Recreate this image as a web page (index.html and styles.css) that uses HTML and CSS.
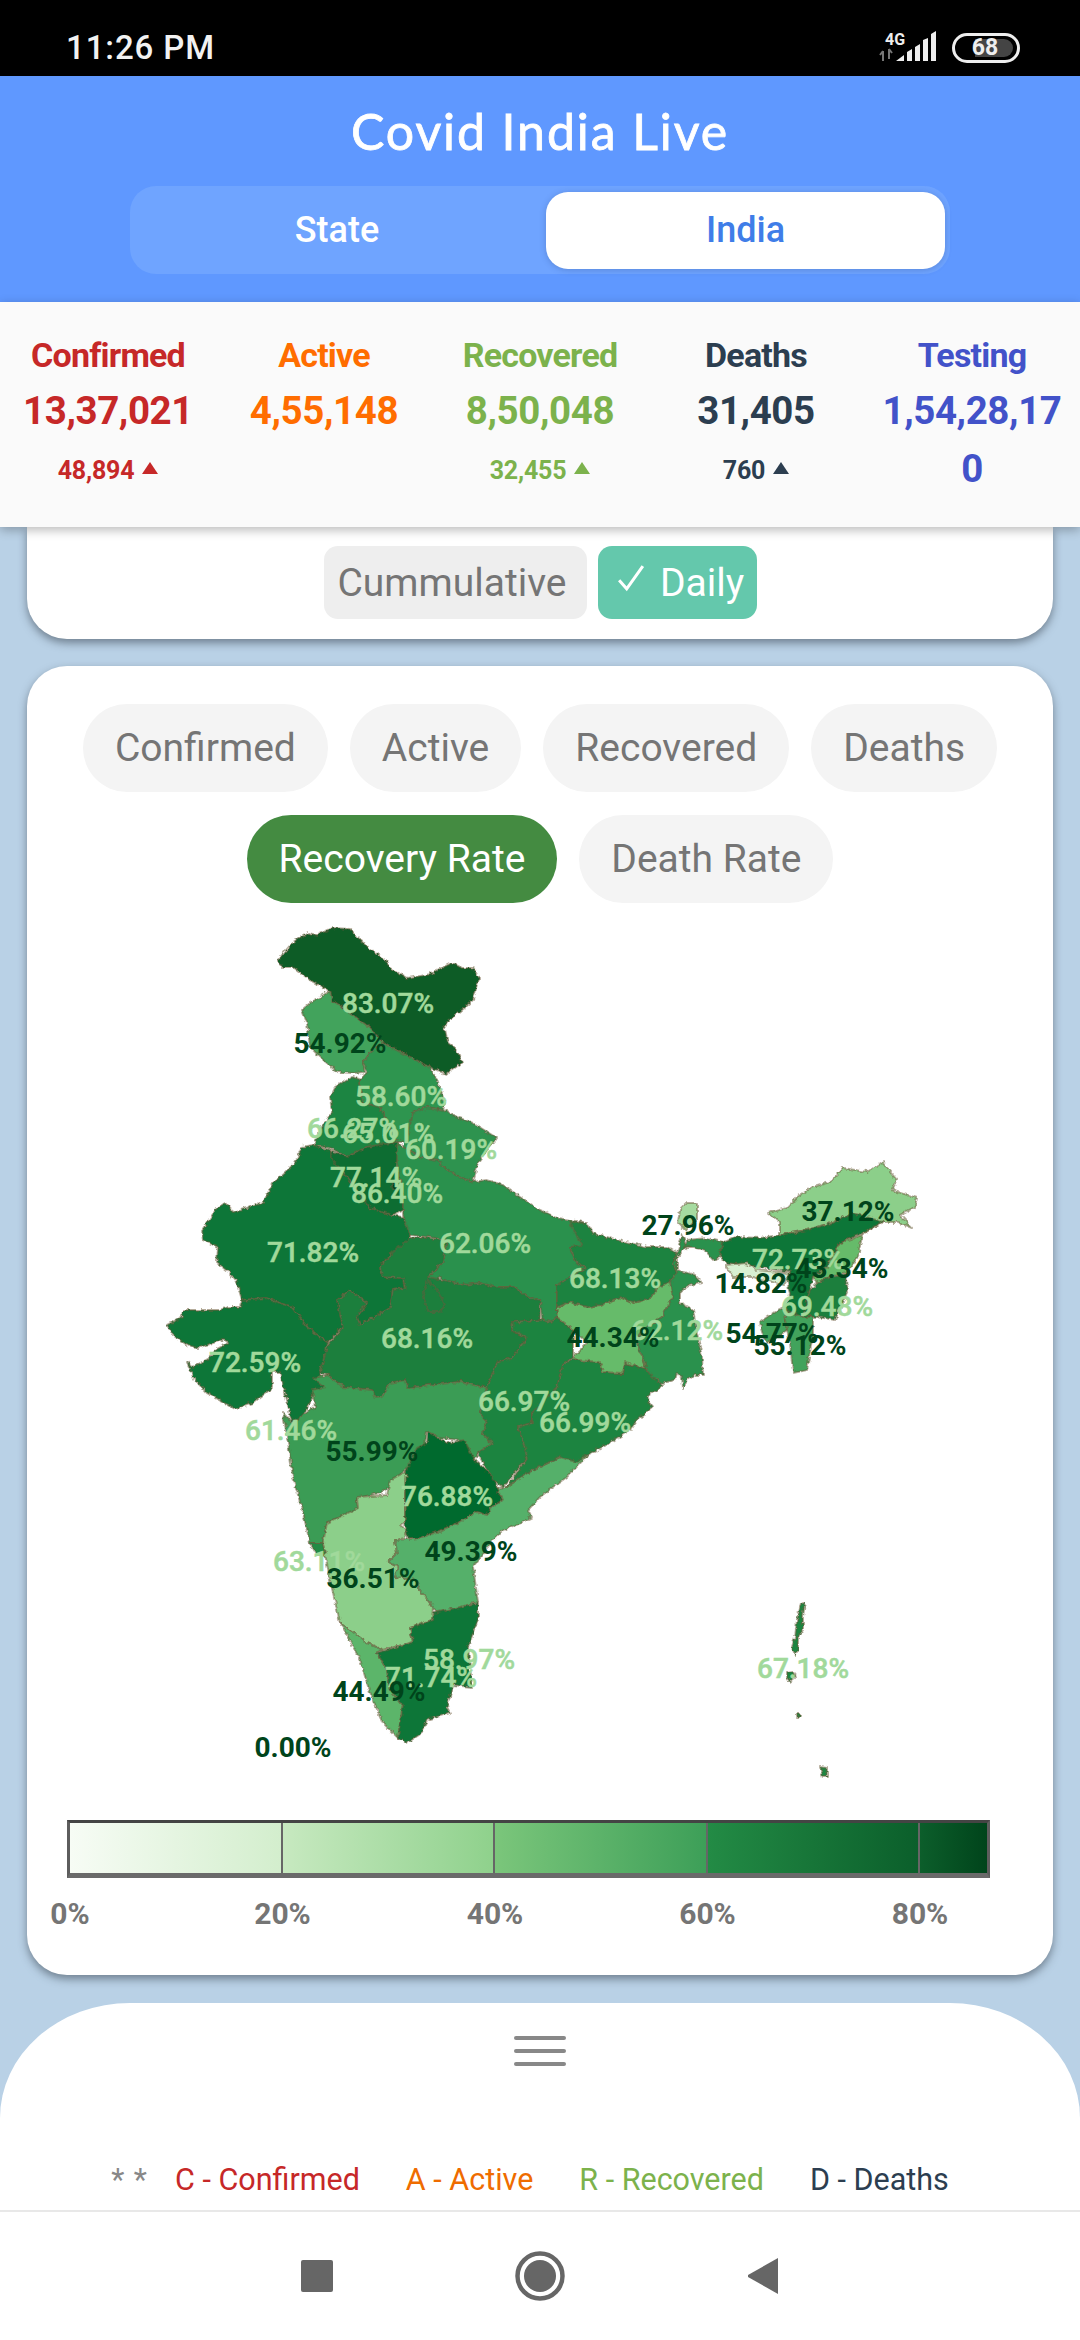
FILE: index.html
```html
<!DOCTYPE html>
<html lang="en">
<head>
<meta charset="utf-8">
<title>Covid India Live</title>
<link rel="stylesheet" href="styles.css">
</head>
<body>
<div class="phone">
  <div class="status">
    <span class="time">11:26 PM</span>
    <div class="status-right">
      <svg class="signal" width="62" height="34" viewBox="0 0 62 34">
        <text class="net" x="6" y="14">4G</text>
        <path class="arrows" d="M4 30V20M1 24l3-4M10 18v10M10 18l3 4" />
        <path class="bars" d="M17 30l8-6v6zM28 21l5-3v12h-5zM36 16l5-3v17h-5zM44 9l5-2v23h-5zM52 3l5-3v30h-5z"/>
      </svg>
      <div class="battery"><span class="battery-fill"></span><span class="battery-num">68</span></div>
    </div>
  </div>

  <header class="head">
    <h1 class="title">Covid India Live</h1>
    <div class="tabs">
      <div class="tab">State</div>
      <div class="tab tab-on">India</div>
    </div>
  </header>

  <section class="stats">
    <div class="stat red"><div class="stat-label">Confirmed</div><div class="stat-value">13,37,021</div><div class="stat-delta">48,894 <svg class="tri" viewBox="0 0 16 12"><path d="M8 0l8 12H0z"/></svg></div></div>
    <div class="stat orange"><div class="stat-label">Active</div><div class="stat-value">4,55,148</div></div>
    <div class="stat green"><div class="stat-label">Recovered</div><div class="stat-value">8,50,048</div><div class="stat-delta">32,455 <svg class="tri" viewBox="0 0 16 12"><path d="M8 0l8 12H0z"/></svg></div></div>
    <div class="stat navy"><div class="stat-label">Deaths</div><div class="stat-value">31,405</div><div class="stat-delta">760 <svg class="tri" viewBox="0 0 16 12"><path d="M8 0l8 12H0z"/></svg></div></div>
    <div class="stat blue"><div class="stat-label">Testing</div><div class="stat-value wrap">1,54,28,170</div></div>
  </section>

  <main class="content">
    <section class="card card-top">
      <div class="toggle">
        <div class="toggle-btn toggle-off">Cummulative</div>
        <div class="toggle-btn toggle-on"><svg class="check" viewBox="0 0 26 26"><path d="M2 15l7 8L24 2"/></svg>Daily</div>
      </div>
    </section>

    <section class="card card-map">
      <div class="chips">
        <div class="chip">Confirmed</div>
        <div class="chip">Active</div>
        <div class="chip">Recovered</div>
        <div class="chip">Deaths</div>
        <div class="chip chip-on">Recovery Rate</div>
        <div class="chip">Death Rate</div>
      </div>

      <svg class="map" width="1026" height="880" viewBox="27 905 1026 880">
        <defs>
          <filter id="rough" filterUnits="userSpaceOnUse" x="27" y="905" width="1026" height="880">
            <feTurbulence type="fractalNoise" baseFrequency="0.22" numOctaves="2" seed="4" result="n"/>
            <feDisplacementMap in="SourceGraphic" in2="n" scale="5" xChannelSelector="R" yChannelSelector="G"/>
          </filter>
        </defs>
        <g class="states" filter="url(#rough)">
          <polygon class="s83" points="278,960 293,942 308,933 317,935 333,928 350,929 367,947 385,960 390,968 407,978 427,975 452,963 462,968 473,968 479,978 473,1000 455,1015 444,1025 448,1043 457,1050 462,1063 446,1074 430,1067 410,1057 383,1043 370,1028 353,1015 332,1000 330,991 310,980 293,967 282,967"/>
          <polygon class="s55" points="330,991 332,1000 353,1015 370,1028 383,1043 370,1053 363,1063 365,1072 353,1073 337,1072 320,1057 310,1047 307,1023 302,1010 310,1003 320,997"/>
          <polygon class="s59" points="370,1053 383,1043 410,1057 430,1067 437,1080 445,1103 443,1110 427,1107 413,1113 410,1133 407,1142 397,1142 383,1113 380,1107 363,1103 360,1090 360,1080 367,1072 363,1063"/>
          <polygon class="s66" points="360,1080 353,1077 335,1087 330,1097 332,1112 322,1127 313,1145 330,1148 348,1157 367,1147 387,1145 397,1142 383,1113 380,1107 363,1103 360,1090"/>
          <polygon class="s60" points="413,1113 427,1107 443,1110 457,1117 473,1123 497,1138 487,1150 478,1163 473,1182 460,1177 443,1167 438,1160 420,1157 403,1147 407,1137"/>
          <polygon class="s72" points="313,1145 302,1147 295,1163 273,1183 263,1203 233,1212 225,1203 217,1208 202,1230 203,1240 218,1247 217,1262 227,1270 237,1283 242,1300 267,1298 293,1308 307,1327 328,1343 337,1333 343,1327 337,1300 350,1290 367,1303 357,1317 360,1325 390,1308 393,1290 405,1288 403,1278 383,1277 380,1267 390,1255 427,1238 410,1238 410,1230 403,1217 392,1215 370,1208 357,1190 340,1168 330,1150"/>
          <polygon class="s77" points="330,1150 348,1157 367,1147 397,1142 400,1147 397,1163 403,1193 403,1210 392,1215 370,1208 363,1200 357,1190 340,1168 333,1162"/>
          <polygon class="s86" points="391,1181 397,1180 399,1188 393,1190"/>
          <polygon class="s62" points="403,1147 420,1157 438,1160 443,1167 460,1177 473,1182 487,1180 503,1185 520,1197 540,1210 557,1218 570,1220 583,1222 590,1237 583,1247 570,1247 577,1263 587,1268 557,1285 557,1307 557,1317 550,1322 542,1320 540,1300 530,1298 513,1287 493,1287 480,1283 467,1285 443,1280 440,1277 437,1290 445,1305 440,1312 428,1312 423,1293 428,1277 442,1263 447,1240 428,1237 410,1235 403,1215 403,1193 397,1163 397,1142"/>
          <polygon class="s68" points="427,1238 410,1238 390,1255 380,1267 383,1277 403,1278 405,1288 393,1290 390,1308 360,1325 357,1317 367,1303 350,1290 337,1300 343,1327 328,1345 325,1353 320,1373 328,1375 343,1387 372,1390 375,1398 382,1397 390,1383 405,1380 408,1388 430,1385 460,1382 487,1388 497,1363 513,1357 527,1338 512,1330 513,1322 540,1320 540,1300 530,1298 513,1287 493,1287 480,1283 467,1285 443,1280 428,1277 442,1263 447,1240"/>
          <polygon class="s68" points="437,1290 445,1305 440,1312 428,1312 423,1293 428,1280"/>
          <polygon class="s72" points="242,1300 267,1298 293,1308 307,1327 328,1343 322,1365 320,1373 325,1390 315,1390 310,1403 302,1417 292,1423 287,1400 283,1385 280,1372 272,1372 272,1388 253,1403 235,1409 220,1400 207,1393 195,1380 187,1362 193,1367 210,1358 218,1348 230,1342 222,1340 198,1348 187,1345 173,1335 167,1325 182,1317 183,1310 220,1310 228,1307 240,1307"/>
          <polygon class="s56" points="313,1378 328,1375 343,1387 372,1390 375,1398 382,1397 390,1383 405,1380 408,1388 430,1385 460,1382 487,1388 480,1413 487,1423 482,1433 493,1443 478,1453 473,1463 468,1450 460,1440 440,1438 427,1432 425,1443 417,1455 410,1467 402,1472 397,1483 380,1493 357,1498 358,1510 327,1523 323,1543 310,1543 303,1513 293,1477 288,1443 283,1413 292,1423 300,1417 315,1407 312,1390 325,1387"/>
          <polygon class="s63" points="310,1543 323,1543 326,1556 317,1555"/>
          <polygon class="s36" points="405,1472 408,1477 405,1493 405,1522 400,1525 407,1530 405,1538 395,1540 397,1553 388,1562 398,1567 395,1577 417,1580 420,1590 433,1607 432,1620 410,1628 413,1642 383,1650 367,1643 340,1622 330,1580 323,1543 327,1523 358,1508 357,1497 387,1495 390,1480"/>
          <polygon class="s76" points="428,1432 447,1443 465,1440 470,1452 477,1462 495,1478 497,1488 503,1500 490,1508 487,1515 477,1512 460,1522 437,1532 420,1538 408,1538 405,1523 405,1477 408,1477 405,1472 417,1448 427,1443"/>
          <polygon class="s49" points="588,1455 567,1477 553,1487 540,1497 528,1510 532,1517 520,1523 503,1530 493,1540 473,1567 478,1602 457,1608 437,1613 433,1607 420,1590 417,1580 395,1577 398,1567 388,1562 397,1553 395,1540 420,1538 437,1532 460,1522 477,1512 487,1515 490,1508 503,1500 497,1488 507,1487 527,1473 560,1457"/>
          <polygon class="s67" points="513,1322 542,1320 550,1322 557,1317 573,1330 573,1357 563,1365 557,1387 540,1407 532,1413 532,1423 518,1427 525,1447 527,1458 513,1475 503,1487 497,1483 485,1467 478,1453 493,1443 482,1433 487,1423 480,1413 487,1388 497,1363 513,1357 527,1338 512,1330"/>
          <polygon class="s67" points="573,1358 577,1360 600,1362 603,1372 623,1373 625,1363 645,1368 657,1380 663,1385 647,1397 652,1408 637,1420 630,1430 610,1443 587,1455 577,1462 560,1457 527,1473 507,1487 527,1458 525,1447 518,1427 532,1423 532,1413 557,1387 563,1365"/>
          <polygon class="s44" points="557,1307 570,1302 587,1307 600,1305 620,1297 633,1303 650,1298 658,1287 670,1282 673,1297 662,1317 643,1330 637,1343 645,1363 645,1368 625,1363 623,1373 603,1372 600,1362 577,1360 573,1357 587,1343 570,1327 557,1317"/>
          <polygon class="s68b" points="570,1222 587,1223 593,1233 617,1240 647,1247 667,1247 677,1253 673,1263 677,1273 670,1282 658,1287 650,1298 633,1303 620,1297 600,1305 587,1307 570,1302 557,1307 557,1285 587,1268 577,1263 570,1247 583,1245 577,1237"/>
          <polygon class="s62" points="682,1235 687,1247 677,1257 677,1270 695,1275 702,1283 690,1285 680,1292 680,1303 693,1310 697,1333 702,1357 703,1375 695,1375 688,1380 683,1388 682,1377 677,1373 675,1380 662,1383 652,1377 645,1368 645,1363 637,1343 643,1330 662,1317 673,1297 670,1282 677,1273 673,1263 677,1253"/>
          <polygon class="s62" points="687,1240 707,1238 723,1242 720,1257 713,1260 705,1250 693,1247 685,1247"/>
          <polygon class="s28" points="680,1210 687,1203 697,1203 697,1220 685,1230 678,1223"/>
          <polygon class="s37" points="768,1213 787,1208 797,1197 813,1187 830,1182 843,1168 867,1172 883,1162 890,1172 897,1180 892,1190 917,1198 915,1207 900,1215 912,1228 897,1222 883,1222 863,1234 853,1213 832,1223 807,1230 780,1235 780,1222"/>
          <polygon class="s72" points="722,1243 737,1237 760,1238 780,1235 807,1230 832,1223 853,1213 883,1222 863,1233 840,1243 827,1267 813,1277 810,1290 803,1317 783,1310 790,1295 787,1278 790,1272 760,1267 727,1263 720,1257"/>
          <polygon class="s14" points="725,1265 747,1263 757,1270 790,1273 783,1285 753,1277 733,1277"/>
          <polygon class="s43" points="862,1235 858,1257 847,1273 830,1277 817,1283 813,1277 827,1267 840,1243"/>
          <polygon class="s69" points="817,1283 830,1277 845,1275 848,1290 835,1320 817,1317 803,1317 810,1290"/>
          <polygon class="s55" points="760,1322 773,1313 783,1308 787,1330 773,1340 767,1343 762,1333"/>
          <polygon class="s55" points="785,1310 803,1317 813,1317 813,1333 807,1370 793,1373 790,1343 785,1320"/>
          <polygon class="s44b" points="340,1622 367,1643 383,1650 377,1653 387,1670 390,1690 403,1705 400,1723 398,1738 383,1723 370,1693 360,1660 348,1637"/>
          <polygon class="s72" points="433,1613 478,1603 478,1620 468,1647 472,1687 453,1685 447,1707 450,1713 427,1720 422,1733 407,1743 398,1738 400,1723 403,1705 390,1690 387,1670 377,1653 413,1642 410,1628 432,1620"/>
          <polygon class="s67" points="801,1603 805,1602 803,1617 803,1630 798,1637 798,1650 795,1655 792,1647 795,1637 797,1620"/>
          <polygon class="s67" points="787,1672 793,1671 795,1678 790,1682 787,1678"/>
          <polygon class="s67" points="797,1714 800,1714 800,1717 797,1717"/>
          <polygon class="s67" points="820,1767 827,1768 827,1777 823,1777"/>
        </g>
        <g class="labels">
          <text class="lab lt" x="388" y="1013">83.07%</text>
          <text class="lab dk" x="340" y="1053">54.92%</text>
          <text class="lab lt" x="401" y="1106">58.60%</text>
          <text class="lab lt" x="353" y="1138">66.27%</text>
          <text class="lab lt" x="388" y="1143">65.01%</text>
          <text class="lab lt" x="451" y="1159">60.19%</text>
          <text class="lab lt" x="376" y="1187">77.14%</text>
          <text class="lab lt" x="397" y="1203">86.40%</text>
          <text class="lab lt" x="313" y="1262">71.82%</text>
          <text class="lab lt" x="485" y="1253">62.06%</text>
          <text class="lab lt" x="427" y="1348">68.16%</text>
          <text class="lab lt" x="255" y="1372">72.59%</text>
          <text class="lab lt" x="524" y="1411">66.97%</text>
          <text class="lab lt" x="585" y="1432">66.99%</text>
          <text class="lab lt" x="615" y="1288">68.13%</text>
          <text class="lab lt" x="677" y="1340">62.12%</text>
          <text class="lab dk" x="613" y="1347">44.34%</text>
          <text class="lab dk" x="688" y="1235">27.96%</text>
          <text class="lab dk" x="848" y="1221">37.12%</text>
          <text class="lab lt" x="798" y="1269">72.73%</text>
          <text class="lab dk" x="842" y="1278">43.34%</text>
          <text class="lab dk" x="761" y="1293">14.82%</text>
          <text class="lab lt" x="827" y="1316">69.48%</text>
          <text class="lab dk" x="772" y="1343">54.77%</text>
          <text class="lab dk" x="800" y="1355">55.12%</text>
          <text class="lab lt" x="291" y="1440">61.46%</text>
          <text class="lab dk" x="372" y="1461">55.99%</text>
          <text class="lab lt" x="447" y="1506">76.88%</text>
          <text class="lab lt" x="319" y="1571">63.11%</text>
          <text class="lab dk" x="373" y="1588">36.51%</text>
          <text class="lab dk" x="471" y="1561">49.39%</text>
          <text class="lab lt" x="469" y="1669">58.97%</text>
          <text class="lab lt" x="431" y="1687">71.74%</text>
          <text class="lab dk" x="379" y="1701">44.49%</text>
          <text class="lab lt" x="803" y="1678">67.18%</text>
          <text class="lab dk" x="293" y="1757">0.00%</text>
        </g>
      </svg>

      <div class="scale">
        <div class="seg seg1"></div>
        <div class="seg seg2"></div>
        <div class="seg seg3"></div>
        <div class="seg seg4"></div>
        <div class="seg seg5"></div>
      </div>
      <div class="ticks">
        <span class="tick">0%</span>
        <span class="tick">20%</span>
        <span class="tick">40%</span>
        <span class="tick">60%</span>
        <span class="tick">80%</span>
      </div>
    </section>

    <section class="sheet">
      <div class="burger"><span></span><span></span><span></span></div>
      <div class="key">
        <span class="key-star">* *</span>
        <span class="red">C - Confirmed</span>
        <span class="orange2">A - Active</span>
        <span class="green">R - Recovered</span>
        <span class="navy">D - Deaths</span>
      </div>
    </section>
  </main>

  <nav class="nav">
    <svg class="nav-icon" width="32" height="32" viewBox="0 0 32 32"><rect width="32" height="32" rx="2"/></svg>
    <svg class="nav-icon" width="50" height="50" viewBox="0 0 50 50"><circle class="ring" cx="25" cy="25" r="22.5"/><circle cx="25" cy="25" r="16"/></svg>
    <svg class="nav-icon" width="32" height="38" viewBox="0 0 32 38"><path d="M31 1v36L1 20v-2z" stroke-linejoin="round"/></svg>
  </nav>
</div>
</body>
</html>
```
FILE: styles.css
```css
* { box-sizing: border-box; }
html, body { margin: 0; padding: 0; background: #fff; }
body { font-family: Roboto, "Liberation Sans", sans-serif; }
.phone { width: 1080px; height: 2340px; display: flex; flex-direction: column; overflow: hidden; }

.status { height: 76px; flex: none; background: #000; color: #f2f2f2; display: flex; align-items: center; justify-content: space-between; padding: 20px 60px 0 66px; }
.time { font-size: 33px; line-height: 40px; font-weight: 500; letter-spacing: .9px; }
.status-right { display: flex; align-items: center; gap: 11px; }
.signal { display: block; overflow: visible; }
.net { font: 700 16px Roboto, sans-serif; fill: #eee; }
.arrows { fill: none; stroke: #777; stroke-width: 2; }
.bars { fill: #eee; }
.battery { position: relative; width: 68px; height: 30px; border: 3px solid #eee; border-radius: 15px; display: flex; align-items: center; justify-content: center; }
.battery-fill { position: absolute; left: 20px; right: 4px; top: 3px; bottom: 3px; background: #444; border-radius: 0 10px 10px 0; }
.battery-num { position: relative; font-size: 23px; line-height: 24px; font-weight: 700; color: #eee; margin-right: 2px; }

.head { flex: none; height: 226px; background: #5f98ff; padding-top: 26px; display: flex; flex-direction: column; align-items: center; }
.title { margin: 0; font: 400 50px/58px Lato, sans-serif; color: #fff; letter-spacing: 1.9px; -webkit-text-stroke: .8px #fff; }
.tabs { margin-top: 26px; width: 820px; height: 88px; background: #6fa4ff; border-radius: 26px; padding: 6px 5px 5px 6px; display: flex; }
.tab { flex: 1; display: flex; align-items: center; justify-content: center; font-size: 36px; font-weight: 500; color: #fff; padding-bottom: 2px; }
.tab:first-child { padding-right: 8px; }
.tab-on { flex: none; width: 399px; background: #fff; color: #3f7de8; border-radius: 22px; box-shadow: 0 1px 6px rgba(40,70,130,.3); }

.stats { flex: none; height: 225px; background: #fafafa; display: grid; grid-template-columns: repeat(5, 216px); box-shadow: 0 3px 10px rgba(0,0,0,.28); position: relative; z-index: 2; padding-top: 31px; }
.stat { display: flex; flex-direction: column; align-items: center; text-align: center; }
.stat-label { font-size: 34px; line-height: 44px; font-weight: 700; letter-spacing: -.8px; }
.stat-value { font-size: 38.5px; line-height: 58px; font-weight: 700; letter-spacing: -.4px; margin-top: 5px; }
.wrap { width: 186px; word-break: break-all; }
.stat-delta { font-size: 25px; font-weight: 700; line-height: 28px; margin-top: 17px; display: flex; align-items: center; gap: 8px; letter-spacing: -.2px; }
.tri { width: 16px; height: 12px; display: block; fill: currentColor; margin-top: -6px; }
.red { color: #c62828; }
.orange { color: #ff6d00; }
.orange2 { color: #ef6c00; }
.green { color: #7cb24c; }
.navy { color: #2c3e50; }
.blue { color: #4252c9; }

.content { flex: 1; background: #b9d1e6; display: flex; flex-direction: column; align-items: center; min-height: 0; }
.card { width: 1026px; background: #fff; box-shadow: 0 4px 8px rgba(40,50,60,.5); flex: none; }
.card-top { height: 112px; border-radius: 0 0 40px 40px; padding-top: 19px; }
.toggle { display: flex; justify-content: center; gap: 11px; padding-left: 1px; }
.toggle-btn { height: 73px; width: 263px; background: #eee; border-radius: 14px; color: #757575; font-size: 39px; display: flex; align-items: center; justify-content: center; }
.toggle-off { padding-right: 7px; }
.toggle-on { width: 159px; background: #64c8ac; color: #fff; gap: 15px; padding-left: 6px; }
.check { width: 28px; height: 30px; fill: none; stroke: #fff; stroke-width: 2.8; margin-top: -10px; flex: none; }

.card-map { margin-top: 27px; height: 1309px; border-radius: 40px; padding-top: 38px; }
.chips { display: flex; flex-wrap: wrap; justify-content: center; gap: 23px 22px; padding: 0 30px; }
.chip { height: 88px; padding: 0 32px; border-radius: 44px; background: #f4f4f4; color: #757575; font-size: 39px; display: flex; align-items: center; }
.chip-on { background: #448b41; color: #fff; }

.map { display: block; margin-top: 2px; }
.states polygon { stroke: #6b5a3a; stroke-opacity: .5; stroke-width: 2; stroke-linejoin: round; }
.s83 { fill: #075c28; }
.s77 { fill: #0b6d31; }
.s76 { fill: #066a2d; }
.s86 { fill: #00441b; }
.s72 { fill: #107637; }
.s68 { fill: #1a7f3e; }
.s68b { fill: #1d8340; }
.s67 { fill: #1f8441; }
.s69 { fill: #1a7f3e; }
.s66 { fill: #1f8542; }
.s63 { fill: #238b45; }
.s62 { fill: #2a914d; }
.s60 { fill: #2e9350; }
.s59 { fill: #2f9550; }
.s56 { fill: #3b9c55; }
.s55 { fill: #43a35b; }
.s49 { fill: #54b06a; }
.s44 { fill: #66bb6a; }
.s44b { fill: #5cb56b; }
.s43 { fill: #66bb6a; }
.s37 { fill: #8ccf8a; }
.s36 { fill: #8ccf8a; }
.s28 { fill: #a6dba0; }
.s14 { fill: #d8f0d2; }
.lab { font: 500 28px Roboto, sans-serif; text-anchor: middle; }
.lt { fill: #a1d99b; stroke: #a1d99b; stroke-width: .5px; }
.dk { fill: #00441b; font-weight: 700; }

.scale { margin: 35px 0 0 40px; width: 923px; height: 58px; display: flex; border: 3px solid #5d5d5d; border-top-color: #444; border-bottom-width: 5px; border-bottom-color: #6a6a6a; }
.seg { flex: none; width: 212.5px; border-right: 2px solid #666; }
.seg1 { background: linear-gradient(90deg, #f7fcf5, #d3eecd); }
.seg2 { background: linear-gradient(90deg, #c7e9c0, #8fd18c); }
.seg3 { background: linear-gradient(90deg, #7bc67b, #3d9f58); }
.seg4 { background: linear-gradient(90deg, #238b45, #0b5f2b); }
.seg5 { flex: 1; border-right: 0; background: linear-gradient(90deg, #0c5e2b, #00441b); }
.ticks { margin: 20px 0 0 43px; display: grid; grid-template-columns: repeat(5, 212.5px); }
.tick { justify-self: start; transform: translateX(-50%); font-size: 30px; line-height: 32px; font-weight: 700; color: #757575; }

.sheet { margin-top: 28px; flex: 1; width: 100%; background: #fff; border-radius: 130px 130px 0 0 / 115px 115px 0 0; padding-top: 33px; display: flex; flex-direction: column; align-items: center; }
.burger { display: flex; flex-direction: column; gap: 9px; width: 52px; }
.burger span { height: 4px; background: #888; border-radius: 2px; }
.key { margin-top: 96px; display: flex; gap: 46px; font-size: 30.5px; line-height: 36px; padding-right: 20px; }
.key-star { color: #888; margin-right: -19px; letter-spacing: 1px; }

.nav { flex: none; height: 130px; background: #fff; border-top: 2px solid #e8e8e8; display: flex; align-items: center; justify-content: center; gap: 0 182px; }
.nav-icon { display: block; fill: #666; }
.ring { fill: none; stroke: #666; stroke-width: 4.5; }
```
